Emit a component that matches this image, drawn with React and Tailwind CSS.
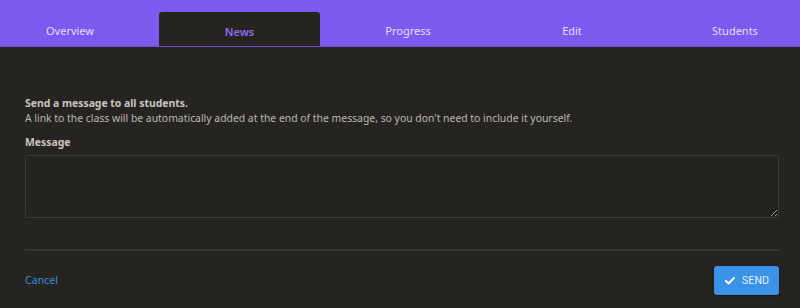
import { Check } from "lucide-react";

const tabs = [
  { label: "Overview", w: "w-[140px]" },
  { label: "News", w: "w-[161px]", active: true, ml: "ml-[19px]" },
  { label: "Progress", w: "w-[176px]" },
  { label: "Edit", w: "w-[152px]" },
  { label: "Students", w: "w-[174px]" },
];

export default function App() {
  return (
    <div
      className="w-[800px] h-[308px] overflow-hidden bg-[#262420] text-[10.4px]"
      style={{ fontFamily: '"Noto Sans", sans-serif' }}
    >
      {/* Tab bar */}
      <div className="h-[47px] bg-[#7d5aee] border-b border-[#6b4fd6] flex items-end overflow-hidden">
        {tabs.map((t) => (
          <div
            key={t.label}
            className={
              t.active
                ? `${t.w} ${t.ml} shrink-0 h-[35px] -mb-px bg-[#262420] rounded-t-[3px] flex items-center justify-center pt-[5px] text-[#8a6ff2] font-semibold text-[11px]`
                : `${t.w} shrink-0 h-[35px] flex items-center justify-center pt-[5px] text-[#e6dcff] text-[11px]`
            }
          >
            {t.label}
          </div>
        ))}
      </div>

      {/* Body */}
      <div className="pl-[25px] pr-[21px] pt-[49px]">
        <p className="font-bold text-[#c9c6c0] leading-[15px]">
          Send a message to all students.
        </p>
        <p className="text-[#bcb9b3] leading-[15px]">
          A link to the class will be automatically added at the end of the
          message, so you don't need to include it yourself.
        </p>

        <label className="block mt-[9px] font-bold text-[#c9c6c0] leading-[15px]">
          Message
        </label>
        <textarea className="block mt-[5px] w-full h-[63px] bg-[#23221f] border border-[#3a3936] rounded-[3px] resize-y outline-none text-[#ddd]" />

        <div className="mt-[31px] h-[2px] bg-[#363431]" />

        <div className="flex items-center justify-between mt-[15px]">
          <a className="text-[#3a8fd6] text-[10.6px] cursor-pointer">Cancel</a>
          <button
            className="w-[65px] h-[29px] rounded-[3px] bg-[#3a93e6] flex items-center justify-center gap-[6px] text-[#e4efff] text-[10.6px] shadow-[0_1px_2px_rgba(0,0,0,0.5)]"
            style={{ fontFamily: "Roboto, sans-serif" }}
          >
            <Check size={12} strokeWidth={4} className="text-white" />
            SEND
          </button>
        </div>
      </div>
    </div>
  );
}
